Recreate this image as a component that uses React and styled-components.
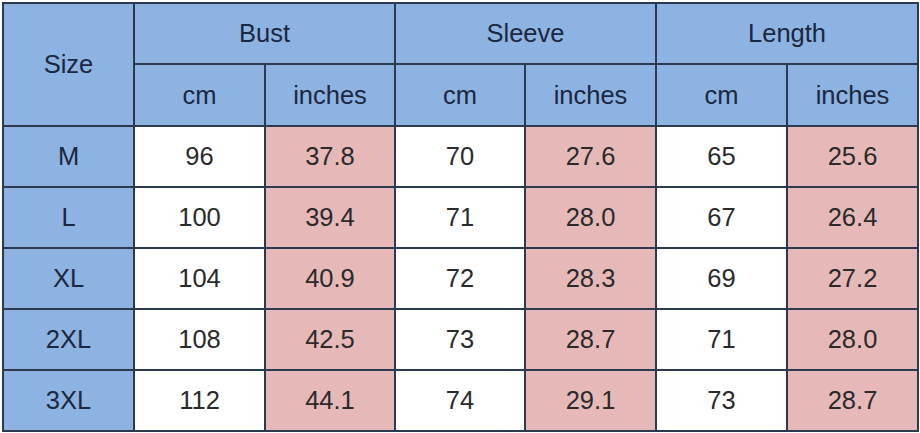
import React from "react";
import styled, { createGlobalStyle } from "styled-components";

const Global = createGlobalStyle`
  html, body { margin: 0; padding: 0; background: #fff; }
  body { font-family: "Liberation Sans", Arial, sans-serif; }
`;

const Wrap = styled.div`
  padding: 2px 3px 3px 2px;
  width: 920px;
  height: 433px;
  box-sizing: border-box;
`;

const Table = styled.table`
  border-collapse: collapse;
  table-layout: fixed;
  width: 915px;
  height: 428px;
  border: 2px solid #55595f;
`;

const Col = styled.col`
  width: ${(p) => p.$w}px;
`;

const Cell = styled.td`
  border: 2px solid #2c3a50;
  text-align: center;
  vertical-align: middle;
  padding: 0;
  font-size: 25.5px;
  font-weight: 400;
  color: ${(p) => (p.$head ? "#1c2740" : "#2a2a2a")};
  background: ${(p) =>
    p.$head ? "#8db3e2" : p.$pink ? "#e6b9b8" : "#ffffff"};
`;

const HeadCell = styled(Cell).attrs({ as: "th", $head: true })``;

const HeadRow = styled.tr`
  height: ${(p) => p.$h}px;
`;

const DataRow = styled.tr`
  height: 61px;
`;

const widths = [131, 131, 130, 130, 131, 131, 131];
const groups = ["Bust", "Sleeve", "Length"];
const units = ["cm", "inches", "cm", "inches", "cm", "inches"];
const rows = [
  ["M", 96, "37.8", 70, "27.6", 65, "25.6"],
  ["L", 100, "39.4", 71, "28.0", 67, "26.4"],
  ["XL", 104, "40.9", 72, "28.3", 69, "27.2"],
  ["2XL", 108, "42.5", 73, "28.7", 71, "28.0"],
  ["3XL", 112, "44.1", 74, "29.1", 73, "28.7"],
];

export default function App() {
  return (
    <Wrap>
      <Global />
      <Table>
        <colgroup>
          {widths.map((w, i) => (
            <Col key={i} $w={w} />
          ))}
        </colgroup>
        <tbody>
          <HeadRow $h={61}>
            <HeadCell rowSpan={2}>Size</HeadCell>
            {groups.map((g) => (
              <HeadCell key={g} colSpan={2}>{g}</HeadCell>
            ))}
          </HeadRow>
          <HeadRow $h={62}>
            {units.map((t, i) => (
              <HeadCell key={i}>{t}</HeadCell>
            ))}
          </HeadRow>
          {rows.map((r) => (
            <DataRow key={r[0]}>
              {r.map((v, i) => (
                <Cell key={i} $head={i === 0} $pink={i > 0 && i % 2 === 0}>
                  {v}
                </Cell>
              ))}
            </DataRow>
          ))}
        </tbody>
      </Table>
    </Wrap>
  );
}
